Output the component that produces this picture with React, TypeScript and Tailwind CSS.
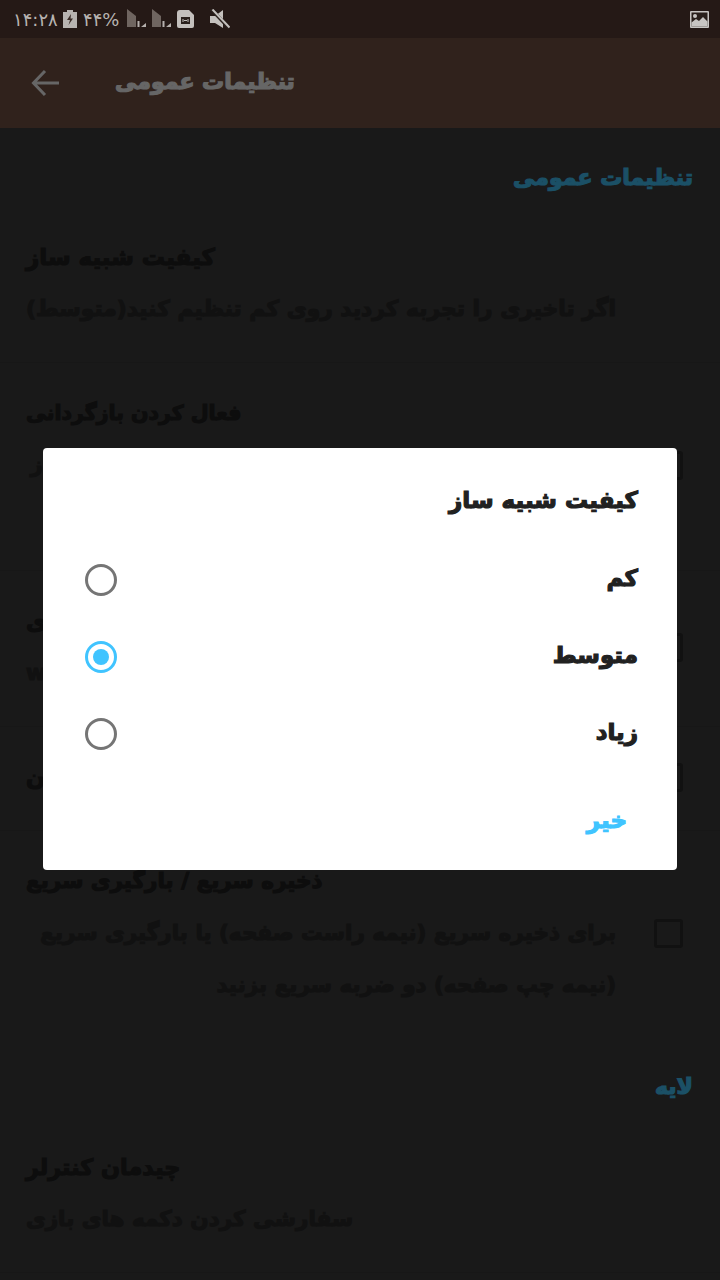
import React from 'react';

const font = "[font-family:'DejaVu_Sans',sans-serif]";
const heavy = 'font-bold [-webkit-text-stroke:1.2px_currentColor]';

const SignalIcon = () => (
  <svg width="20" height="20" viewBox="0 0 20 20" className="shrink-0 mb-[2px]">
    <path d="M0 1 L9 8 V19 H0 Z" fill="#6f6560" />
    <rect x="10.5" y="13" width="2" height="6" fill="#b5b0ad" />
    <path d="M14 19 L19 19 L19 15 Z" fill="#b5b0ad" />
  </svg>
);

const SectionHeader = ({ title, className }: { title: string; className: string }) => (
  <div dir="rtl" className={`px-[27px] h-[52px] leading-[52px] text-[22px] text-[#44c8ff] ${heavy} ${className}`}>
    {title}
  </div>
);

interface RowProps {
  title: string;
  titleClass?: string;
  lines?: string;
  linesClass?: string;
  checkbox?: boolean;
  bottomBorder?: boolean;
}

const SettingRow = ({
  title,
  titleClass = 'text-[22.3px]',
  lines,
  linesClass = 'text-[21.5px]',
  checkbox,
  bottomBorder = true,
}: RowProps) => (
  <div className={`flex pt-[24px] pb-[27px] pl-[26px] ${bottomBorder ? 'border-b border-[#3a3a3a]' : ''}`}>
    <div className="w-[590px] shrink-0 flex flex-col items-start">
      <div dir="rtl" className={`h-[52px] leading-[52px] text-[#212121] whitespace-nowrap ${titleClass} ${heavy}`}>
        {title}
      </div>
      {lines && (
        <div dir="rtl" className={`leading-[52px] text-[#2b2b2b] whitespace-pre ${linesClass} ${heavy}`}>
          {lines}
        </div>
      )}
    </div>
    {checkbox && (
      <div className="ml-[38px] self-center w-[29px] h-[29px] rounded-[3px] border-[3px] border-[#2b2b2b] shrink-0" />
    )}
  </div>
);

const Radio = ({ on }: { on?: boolean }) => (
  <div className={`w-[32px] h-[32px] rounded-full border-[3.5px] flex items-center justify-center ${on ? 'border-[#40c4ff]' : 'border-[#757575]'}`}>
    {on && <div className="w-[16px] h-[16px] rounded-full bg-[#40c4ff]" />}
  </div>
);

const Option = ({ label, on }: { label: string; on?: boolean }) => (
  <div className="h-[77px] pl-[41.5px] pr-[39px] flex items-center justify-between">
    <Radio on={on} />
    <span dir="rtl" className={`mb-[3px] text-[23px] text-[#212121] ${heavy}`}>{label}</span>
  </div>
);

export default function App() {
  return (
    <div className={`relative w-[720px] h-[1280px] overflow-hidden bg-[#3f3f3f] ${font}`}>
      <div className="h-[38px] bg-[#5d4037]" />
      <div className="h-[90px] bg-[#795548] flex items-center">
        <svg width="30" height="28" viewBox="0 0 30 28" fill="none" stroke="#ffffff" strokeWidth="3" className="ml-[31px] shrink-0">
          <path d="M28 14 H3 M14 2 L2.5 14 L14 26" />
        </svg>
        <span dir="rtl" className={`ml-[54px] mb-[4px] text-[22px] text-white ${heavy}`}>تنظیمات عمومی</span>
      </div>

      <SectionHeader title="تنظیمات عمومی" className="mt-[24px] mb-[3px]" />
      <SettingRow
        title="کیفیت شبیه ساز"
        titleClass="text-[23px]"
        lines="اگر تاخیری را تجربه کردید روی کم تنظیم کنید(متوسط)"
        linesClass="text-[21.8px]"
      />
      <SettingRow
        title="فعال کردن بازگردانی"
        titleClass="text-[20.5px]"
        lines={'با این گزینه می توانید روند بازی را به عقب برگردانید باز\nو اشتباه را جبران کنید'}
        linesClass="text-[21.2px] w-full"
        checkbox
      />
      <SettingRow title="فعال کردن صدای بازی و افکت های آن در بازی" lines="سرعت بیشتر در w" checkbox />
      <SettingRow title="نمایش دکمه ها در حالت افقی و عمودی با چرخاندن" checkbox />
      <SettingRow
        title="ذخیره سریع / بارگیری سریع"
        titleClass="text-[21.5px]"
        lines={'برای ذخیره سریع (نیمه راست صفحه) یا بارگیری سریع\n(نیمه چپ صفحه) دو ضربه سریع بزنید'}
        linesClass="text-[21.5px] w-full"
        checkbox
        bottomBorder={false}
      />

      <SectionHeader title="لایه" className="mt-[23px] mb-[4px]" />
      <SettingRow title="چیدمان کنترلر" lines="سفارشی کردن دکمه های بازی" />

      {/* scrim and dialog */}
      <div className="absolute inset-0 bg-black/60" />

      <div className="absolute inset-x-0 top-0 h-[38px] flex items-center text-[#b8b4b1]">
        <span className="ml-[13px] w-[46px] text-[18px] whitespace-nowrap">۱۴:۲۸</span>
        <svg width="14" height="18" viewBox="0 0 14 18" className="ml-[4px] shrink-0">
          <path d="M4 0 H10 V2 H14 V18 H0 V2 H4 Z" fill="#b8b4b1" />
          <path d="M8 4 L4 10 H7 L5.5 15 L10 8.5 H7.5 Z" fill="#3a2c27" />
        </svg>
        <span className="ml-[6px] w-[37px] text-[18px] whitespace-nowrap">۴۴%</span>
        <div className="ml-[7px]"><SignalIcon /></div>
        <div className="ml-[5px]"><SignalIcon /></div>
        <svg width="17" height="18" viewBox="0 0 17 18" className="ml-[5px] shrink-0">
          <path d="M3 0 H12 L17 5 V16 Q17 18 15 18 H2 Q0 18 0 16 V3 Q0 0 3 0 Z" fill="#c4c0bd" />
          <rect x="4" y="7" width="9" height="7" fill="#2a201c" />
          <path d="M6 9 V12 M11 9 V12 M7 10.5 H10" stroke="#c4c0bd" strokeWidth="1" />
        </svg>
        <svg width="20" height="20" viewBox="0 0 20 20" className="ml-[16px] shrink-0">
          <path d="M0 7 H5 L13 1 V19 L5 14 H0 Z" fill="#c4c0bd" />
          <path d="M1 0 L19 19" stroke="#2a201c" strokeWidth="3.5" />
          <path d="M2.5 0.5 L19.5 18.5" stroke="#c4c0bd" strokeWidth="2" />
        </svg>
        <svg width="19" height="17" viewBox="0 0 19 17" className="ml-auto mr-[11px] shrink-0">
          <rect width="19" height="17" rx="1" fill="#c8c5c3" />
          <rect x="1.5" y="1.5" width="16" height="14" fill="#2a201c" />
          <circle cx="5" cy="5" r="2" fill="#c8c5c3" />
          <path d="M1.5 15.5 V11.5 L6 8 L9 10 L13 6 L17.5 10.5 V15.5 Z" fill="#c8c5c3" />
        </svg>
      </div>

      <div className="absolute left-[43px] top-[448px] w-[634px] bg-white rounded-[4px] pt-[30px] pb-[26px]">
        <div dir="rtl" className={`pr-[39px] h-[44px] leading-[44px] text-[23px] text-[#212121] ${heavy}`}>
          کیفیت شبیه ساز
        </div>
        <div className="mt-[19px]">
          <Option label="کم" />
          <Option label="متوسط" on />
          <Option label="زیاد" />
        </div>
        <div dir="rtl" className={`mt-[24px] pr-[50px] h-[48px] leading-[48px] text-[23px] text-[#40c4ff] ${heavy}`}>
          خیر
        </div>
      </div>
    </div>
  );
}
